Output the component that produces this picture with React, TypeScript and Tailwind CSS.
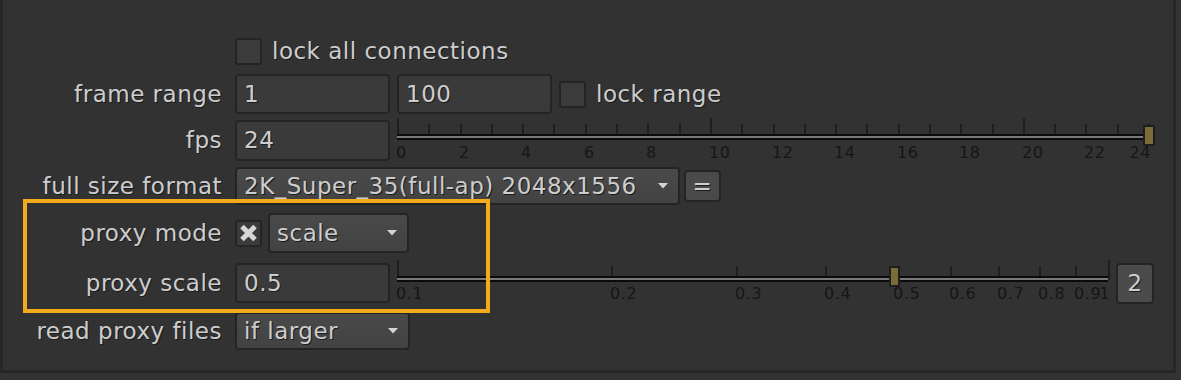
import React from 'react';

const txt = "font-['DejaVu_Sans',sans-serif] text-[23px] leading-none tracking-[0.5px] text-[#cdcdcd] [text-shadow:1px_1px_0_#1b1b1b] whitespace-nowrap";

function Label({ children }: { children?: React.ReactNode }) {
  return <div className={`w-[219px] shrink-0 text-right ${txt}`}>{children}</div>;
}

function Field({ value, w, h = 40 }: { value: string; w: number; h?: number }) {
  return (
    <div
      className={`flex items-center rounded-[4px] border-2 border-[#242424] bg-[#3a3a3a] pl-[7px] ${txt}`}
      style={{ width: w, height: h }}
    >
      {value}
    </div>
  );
}

function Check({ checked = false }: { checked?: boolean }) {
  return (
    <div className="flex h-[27px] w-[27px] shrink-0 items-center justify-center rounded-[3px] border-2 border-[#242424] bg-[#3b3b3b]">
      {checked && (
        <svg width="17" height="18" viewBox="0 0 17 18">
          <path d="M2 2.5 L15 15.5 M15 2.5 L2 15.5" stroke="#d6d6d6" strokeWidth="5" />
        </svg>
      )}
    </div>
  );
}

function Dropdown({ value, w, h = 40 }: { value: string; w: number; h?: number }) {
  return (
    <div
      className={`flex items-center rounded-[4px] border-2 border-[#242424] bg-gradient-to-b from-[#4a4a4a] to-[#424242] pl-[7px] pr-[10px] ${txt}`}
      style={{ width: w, height: h }}
    >
      <span>{value}</span>
      <svg className="ml-auto shrink-0" width="10" height="6" viewBox="0 0 10 6">
        <path d="M0 0 H10 L5 5.5 Z" fill="#d4d4d4" />
      </svg>
    </div>
  );
}

const tickFont = { fontFamily: 'DejaVu Sans', fontSize: 16, fill: '#161616', letterSpacing: 0.6 };

function FpsSlider() {
  const step = 751 / 24;
  const ticks = Array.from({ length: 25 }, (_, i) => i);
  return (
    <svg width="762" height="46" className="ml-[7px] shrink-0 self-start overflow-visible">
      {ticks.map((i) => {
        const x = Math.round(i * step) + 1;
        const major = i % 10 === 0;
        return <rect key={i} x={x - 1} y={major ? 0 : 6} width="2" height={major ? 16 : 10} fill="#1e1e1e" />;
      })}
      <rect x="0" y="16" width="751" height="2" fill="#0b0b0b" />
      <rect x="0" y="18" width="751" height="2" fill="#7a7a7a" />
      <rect x="0" y="20" width="751" height="2" fill="#0b0b0b" />
      {ticks
        .filter((i) => i % 2 === 0 && i < 24)
        .map((i) => (
          <text key={i} x={Math.round(i * step) - 1} y="40" {...tickFont}>
            {i}
          </text>
        ))}
      <text x="754" y="40" textAnchor="end" {...tickFont}>
        24
      </text>
      <rect x="747" y="8" width="10" height="19" fill="#7a6b38" stroke="#1e1e1e" strokeWidth="2" />
    </svg>
  );
}

function ProxySlider() {
  const W = 711;
  const vals = [0.1, 0.2, 0.3, 0.4, 0.5, 0.6, 0.7, 0.8, 0.9, 1];
  const px = (v: number) => Math.round(Math.log10(v / 0.1) * W);
  return (
    <svg width="713" height="46" className="ml-[7px] shrink-0 self-start overflow-visible">
      {vals.map((v, i) => {
        const x = px(v) + 1;
        const tall = i === 0 || i === vals.length - 1;
        return <rect key={v} x={x - 1} y={tall ? 0 : 6} width="2" height={tall ? (i === 0 ? 16 : 20) : 10} fill="#1e1e1e" />;
      })}
      <rect x="0" y="16" width={W} height="2" fill="#0b0b0b" />
      <rect x="0" y="18" width={W} height="2" fill="#7a7a7a" />
      <rect x="0" y="20" width={W} height="2" fill="#0b0b0b" />
      {vals.slice(0, 9).map((v) => (
        <text key={v} x={px(v) - 1} y="39" {...tickFont}>
          {v.toFixed(1)}
        </text>
      ))}
      <text x="713" y="39" textAnchor="end" {...tickFont}>
        1
      </text>
      <rect x="493" y="7" width="9" height="19" fill="#7a6b38" stroke="#1e1e1e" strokeWidth="2" />
    </svg>
  );
}

export default function App() {
  return (
    <div className="h-[380px] w-[1181px] overflow-hidden bg-[#333333]">
      <div className="relative flex h-[373px] w-[1176px] flex-col border-x-[3px] border-b-[3px] border-[#262626] bg-[#323232]">
        {/* lock all connections */}
        <div className="mt-[38px] flex h-[27px] items-center">
          <Label />
          <div className="ml-[13px] flex items-center">
            <Check />
            <span className={`ml-[10px] ${txt}`}>lock all connections</span>
          </div>
        </div>

        {/* frame range */}
        <div className="mt-[9px] flex h-[40px] items-center">
          <Label>frame range</Label>
          <div className="ml-[13px] flex items-center">
            <Field value="1" w={155} />
            <div className="ml-[7px]">
              <Field value="100" w={155} />
            </div>
            <div className="ml-[7px]">
              <Check />
            </div>
            <span className={`ml-[10px] ${txt}`}>lock range</span>
          </div>
        </div>

        {/* fps */}
        <div className="mt-[6px] flex h-[41px] items-center">
          <Label>fps</Label>
          <div className="ml-[13px] flex items-center">
            <Field value="24" w={155} h={41} />
            <FpsSlider />
          </div>
        </div>

        {/* full size format */}
        <div className="mt-[6px] flex h-[38px] items-center">
          <Label>full size format</Label>
          <div className="ml-[13px] flex items-center">
            <Dropdown value="2K_Super_35(full-ap) 2048x1556" w={445} h={38} />
            <div
              className={`ml-[4px] flex h-[32px] w-[37px] items-center justify-center rounded-[4px] border-2 border-[#242424] bg-[#4a4a4a] ${txt}`}
            >
              =
            </div>
          </div>
        </div>

        {/* proxy mode */}
        <div className="mt-[8px] flex h-[40px] items-center">
          <Label>proxy mode</Label>
          <div className="ml-[13px] flex items-center">
            <Check checked />
            <div className="ml-[6px]">
              <Dropdown value="scale" w={141} />
            </div>
          </div>
        </div>

        {/* proxy scale */}
        <div className="mt-[10px] flex h-[40px] items-center">
          <Label>proxy scale</Label>
          <div className="ml-[13px] flex items-center">
            <Field value="0.5" w={155} />
            <ProxySlider />
            <div
              className={`ml-[6px] flex h-[41px] w-[38px] items-center justify-center rounded-[4px] border-2 border-[#242424] bg-[#4b4b4b] ${txt}`}
            >
              2
            </div>
          </div>
        </div>

        {/* read proxy files */}
        <div className="mt-[9px] flex h-[38px] items-center">
          <Label>read proxy files</Label>
          <div className="ml-[13px] flex items-center">
            <Dropdown value="if larger" w={175} h={38} />
          </div>
        </div>

        {/* highlight annotation */}
        <div className="pointer-events-none absolute left-[20px] top-[199px] h-[114px] w-[467px] border-4 border-[#f4aa1d]" />
      </div>
    </div>
  );
}
